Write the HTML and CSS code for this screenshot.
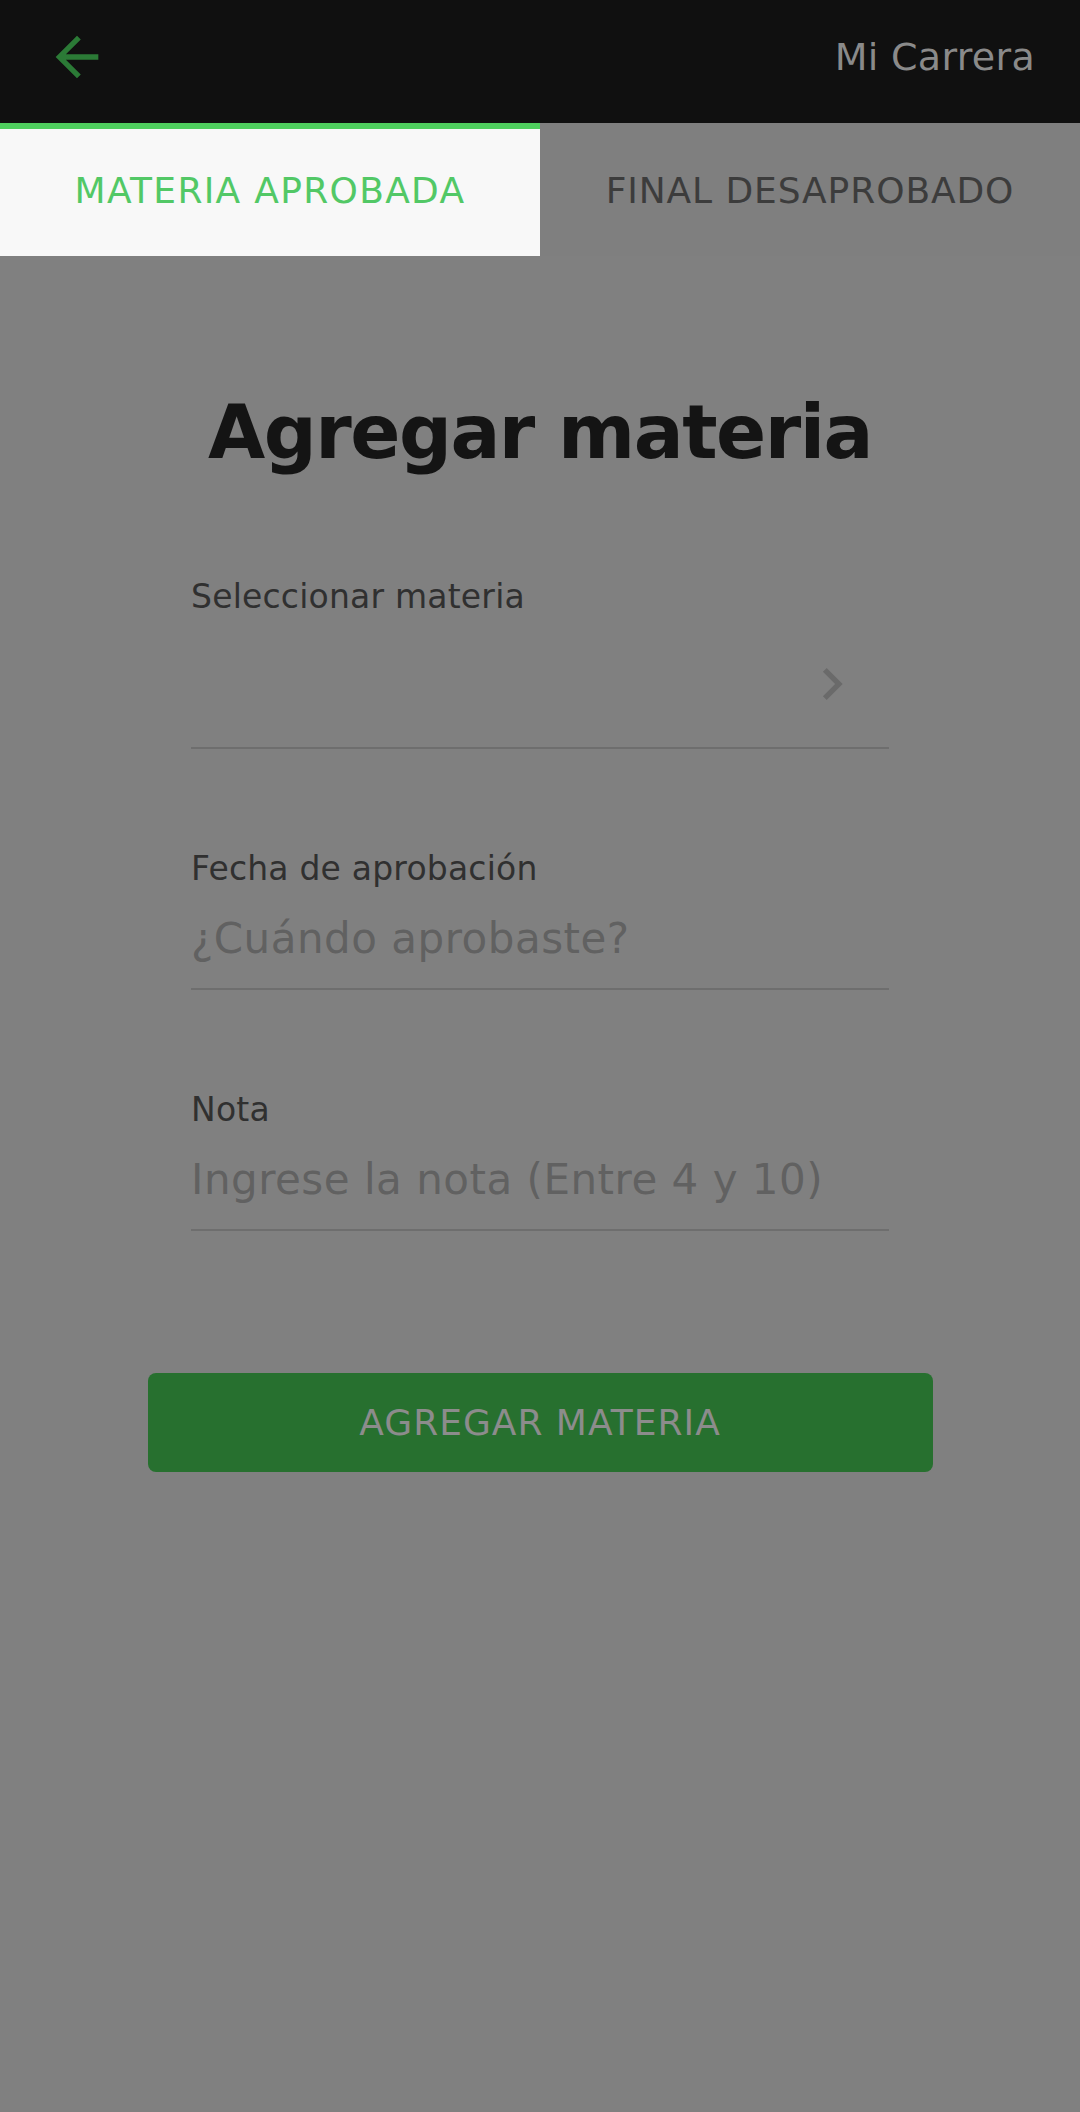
FILE: index.html
```html
<!DOCTYPE html>
<html lang="es">
<head>
<meta charset="utf-8">
<title>Agregar materia</title>
<link rel="stylesheet" href="styles.css">
</head>
<body>
<header class="topbar">
  <svg class="back" viewBox="0 0 24 24" aria-hidden="true"><path d="M20 11H7.83l5.59-5.59L12 4l-8 8 8 8 1.41-1.41L7.83 13H20v-2z"/></svg>
  <span class="topbar-title">Mi Carrera</span>
</header>
<nav class="tabs">
  <div class="tab tab-active">MATERIA APROBADA</div>
  <div class="tab">FINAL DESAPROBADO</div>
</nav>
<main class="content">
  <h1 class="title">Agregar materia</h1>
  <div class="form">
    <div class="field">
      <div class="label">Seleccionar materia</div>
      <div class="select-row">
        <svg class="chevron" viewBox="0 0 24 24" aria-hidden="true"><path d="M10 6L8.59 7.41 13.17 12l-4.58 4.59L10 18l6-6z"/></svg>
      </div>
    </div>
    <div class="field">
      <div class="label">Fecha de aprobación</div>
      <div class="placeholder">¿Cuándo aprobaste?</div>
    </div>
    <div class="field">
      <div class="label">Nota</div>
      <div class="placeholder">Ingrese la nota (Entre 4 y 10)</div>
    </div>
  </div>
  <button class="btn" type="button">AGREGAR MATERIA</button>
</main>
</body>
</html>
```
FILE: styles.css
```css
html, body {
  margin: 0;
  padding: 0;
}
body {
  width: 1080px;
  height: 2112px;
  overflow: hidden;
  background: #808080;
  font-family: "DejaVu Sans", "Open Sans", sans-serif;
}
.topbar {
  height: 123px;
  box-sizing: border-box;
  padding: 0 45px 9px 45px;
  display: flex;
  align-items: center;
  justify-content: space-between;
  background: #101010;
}
.back {
  width: 64px;
  height: 64px;
  fill: #2b7a36;
}
.topbar-title {
  font-size: 38px;
  line-height: 1;
  letter-spacing: 0.3px;
  color: #8a8a8a;
}
.tabs {
  display: flex;
  height: 133px;
}
.tab {
  flex: 1;
  display: flex;
  align-items: center;
  justify-content: center;
  box-sizing: border-box;
  padding-bottom: 5px;
  border-top: 6px solid #7f7f7f;
  background: #7f7f7f;
  color: #3c3c3c;
  font-size: 36px;
  letter-spacing: 0.9px;
}
.tab-active {
  background: #f8f8f8;
  border-top-color: #4fcf5e;
  color: #52c866;
  letter-spacing: 1.3px;
}
.content {
  padding-top: 131px;
  display: flex;
  flex-direction: column;
  align-items: center;
}
.title {
  margin: 0;
  font-size: 74px;
  line-height: 90px;
  font-weight: 700;
  letter-spacing: -1.5px;
  color: #141414;
}
.form {
  width: 698px;
  margin-top: 100px;
  display: flex;
  flex-direction: column;
  gap: 100px;
}
.field {
  border-bottom: 2px solid #6e6e6e;
}
.label {
  font-size: 33px;
  line-height: 40px;
  letter-spacing: 0.2px;
  color: #303030;
}
.select-row {
  height: 130px;
  display: flex;
  align-items: center;
  justify-content: flex-end;
  padding-right: 25px;
}
.chevron {
  width: 64px;
  height: 64px;
  margin-top: 4px;
  fill: #6a6a6a;
}
.placeholder {
  margin-top: 25px;
  padding-bottom: 24px;
  font-size: 42px;
  line-height: 50px;
  letter-spacing: 0.5px;
  color: #616161;
}
.btn {
  width: 785px;
  height: 99px;
  margin-top: 142px;
  border: none;
  border-radius: 8px;
  background: #27702f;
  color: #8c8c8c;
  font-family: inherit;
  font-size: 36px;
  letter-spacing: 1px;
}
```
